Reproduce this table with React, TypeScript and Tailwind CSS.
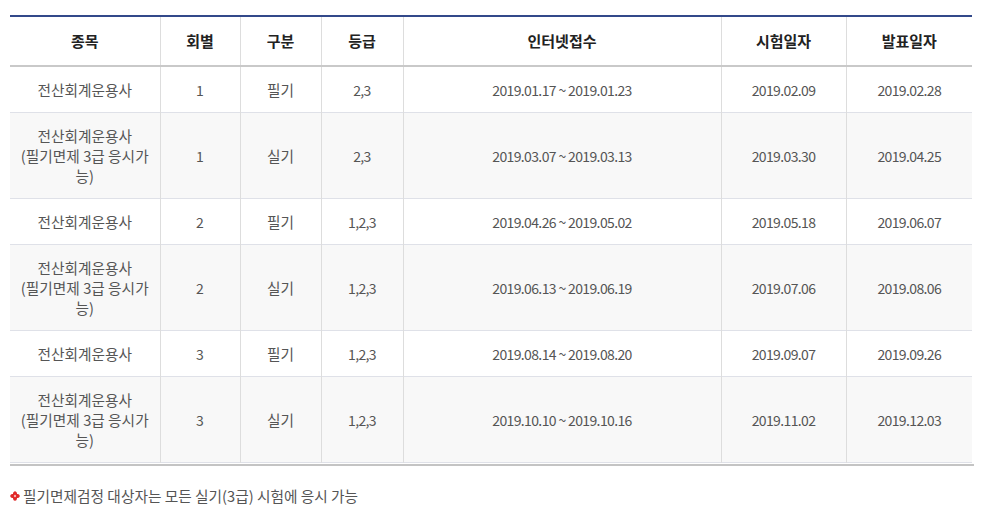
import React from 'react';

type Row = {
    name: string[],
    round: string,
    kind: string,
    grade: string,
    apply: string,
    exam: string,
    result: string,
    shaded?: boolean
};

const single = ['전산회계운용사'];
const multi = ['전산회계운용사', '(필기면제 3급 응시가', '능)'];

const rows: Row[] = [
    { name: single, round: '1', kind: '필기', grade: '2,3', apply: '2019.01.17 ~ 2019.01.23', exam: '2019.02.09', result: '2019.02.28' },
    { name: multi, round: '1', kind: '실기', grade: '2,3', apply: '2019.03.07 ~ 2019.03.13', exam: '2019.03.30', result: '2019.04.25', shaded: true },
    { name: single, round: '2', kind: '필기', grade: '1,2,3', apply: '2019.04.26 ~ 2019.05.02', exam: '2019.05.18', result: '2019.06.07' },
    { name: multi, round: '2', kind: '실기', grade: '1,2,3', apply: '2019.06.13 ~ 2019.06.19', exam: '2019.07.06', result: '2019.08.06', shaded: true },
    { name: single, round: '3', kind: '필기', grade: '1,2,3', apply: '2019.08.14 ~ 2019.08.20', exam: '2019.09.07', result: '2019.09.26' },
    { name: multi, round: '3', kind: '실기', grade: '1,2,3', apply: '2019.10.10 ~ 2019.10.16', exam: '2019.11.02', result: '2019.12.03', shaded: true },
];

const headers = ['종목', '회별', '구분', '등급', '인터넷접수', '시험일자', '발표일자'];
const widths = ['w-[150px]', 'w-[80px]', 'w-[81px]', 'w-[82px]', 'w-[318px]', 'w-[125px]', 'w-[126px]'];

const num = 'text-[14px] tracking-[-0.045em]';
const cell = 'border-l border-l-[#dddddd] text-center align-middle';

const Bullet = () => (
    <svg width="10" height="10" viewBox="0 0 10 10" className="shrink-0">
        <path d="M5 0 L7 3 L10 5 L7 7 L5 10 L3 7 L0 5 L3 3 Z" fill="#e02828" />
        <circle cx="5" cy="2.3" r="1.9" fill="#e02828" />
        <circle cx="5" cy="7.7" r="1.9" fill="#e02828" />
        <circle cx="2.3" cy="5" r="1.9" fill="#e02828" />
        <circle cx="7.7" cy="5" r="1.9" fill="#e02828" />
        <circle cx="5" cy="5" r="1.2" fill="#f5b0b0" />
    </svg>
);

export default function App() {
    return (
        <div className="w-[984px] h-[514px] bg-white px-[10px] pt-[15px] font-['Noto_Sans_CJK_KR','Noto_Sans',sans-serif]">
            <table className="w-[962px] table-fixed border-collapse border-t-2 border-t-[#32498a]">
                <colgroup>
                    {widths.map((w, i) => <col key={i} className={w} />)}
                </colgroup>
                <thead>
                    <tr className="h-[50px] border-b-2 border-b-[#c9c9c9]">
                        {headers.map((h, i) => (
                            <th key={h} className={`text-[15px] font-bold text-[#222] text-center align-middle ${i > 0 ? 'border-l border-l-[#dddddd]' : ''}`}>
                                {h}
                            </th>
                        ))}
                    </tr>
                </thead>
                <tbody className="text-[14.7px] text-[#555] leading-[20px]">
                    {rows.map((r, i) => (
                        <tr key={i} className={`border-b border-b-[#dfe1e8] ${r.shaded ? 'bg-[#f8f8f8]' : 'bg-white'}`}>
                            <td className="px-[4px] pt-[13px] pb-[12px] text-center align-middle">
                                {r.name.map((line, j) => <div key={j}>{line}</div>)}
                            </td>
                            <td className={`${cell} text-[14px]`}>{r.round}</td>
                            <td className={cell}>{r.kind}</td>
                            <td className={`${cell} ${num}`}>{r.grade}</td>
                            <td className={`${cell} ${num}`}>{r.apply}</td>
                            <td className={`${cell} ${num}`}>{r.exam}</td>
                            <td className={`${cell} ${num}`}>{r.result}</td>
                        </tr>
                    ))}
                </tbody>
            </table>
            <div className="h-[2px] mt-[1px] bg-[#c4c4c4]" />
            <div className="mt-[20px] flex items-center gap-[3px] text-[14.7px] text-[#555] leading-[20px]">
                <Bullet />
                <span>필기면제검정 대상자는 모든 실기(3급) 시험에 응시 가능</span>
            </div>
        </div>
    );
}
